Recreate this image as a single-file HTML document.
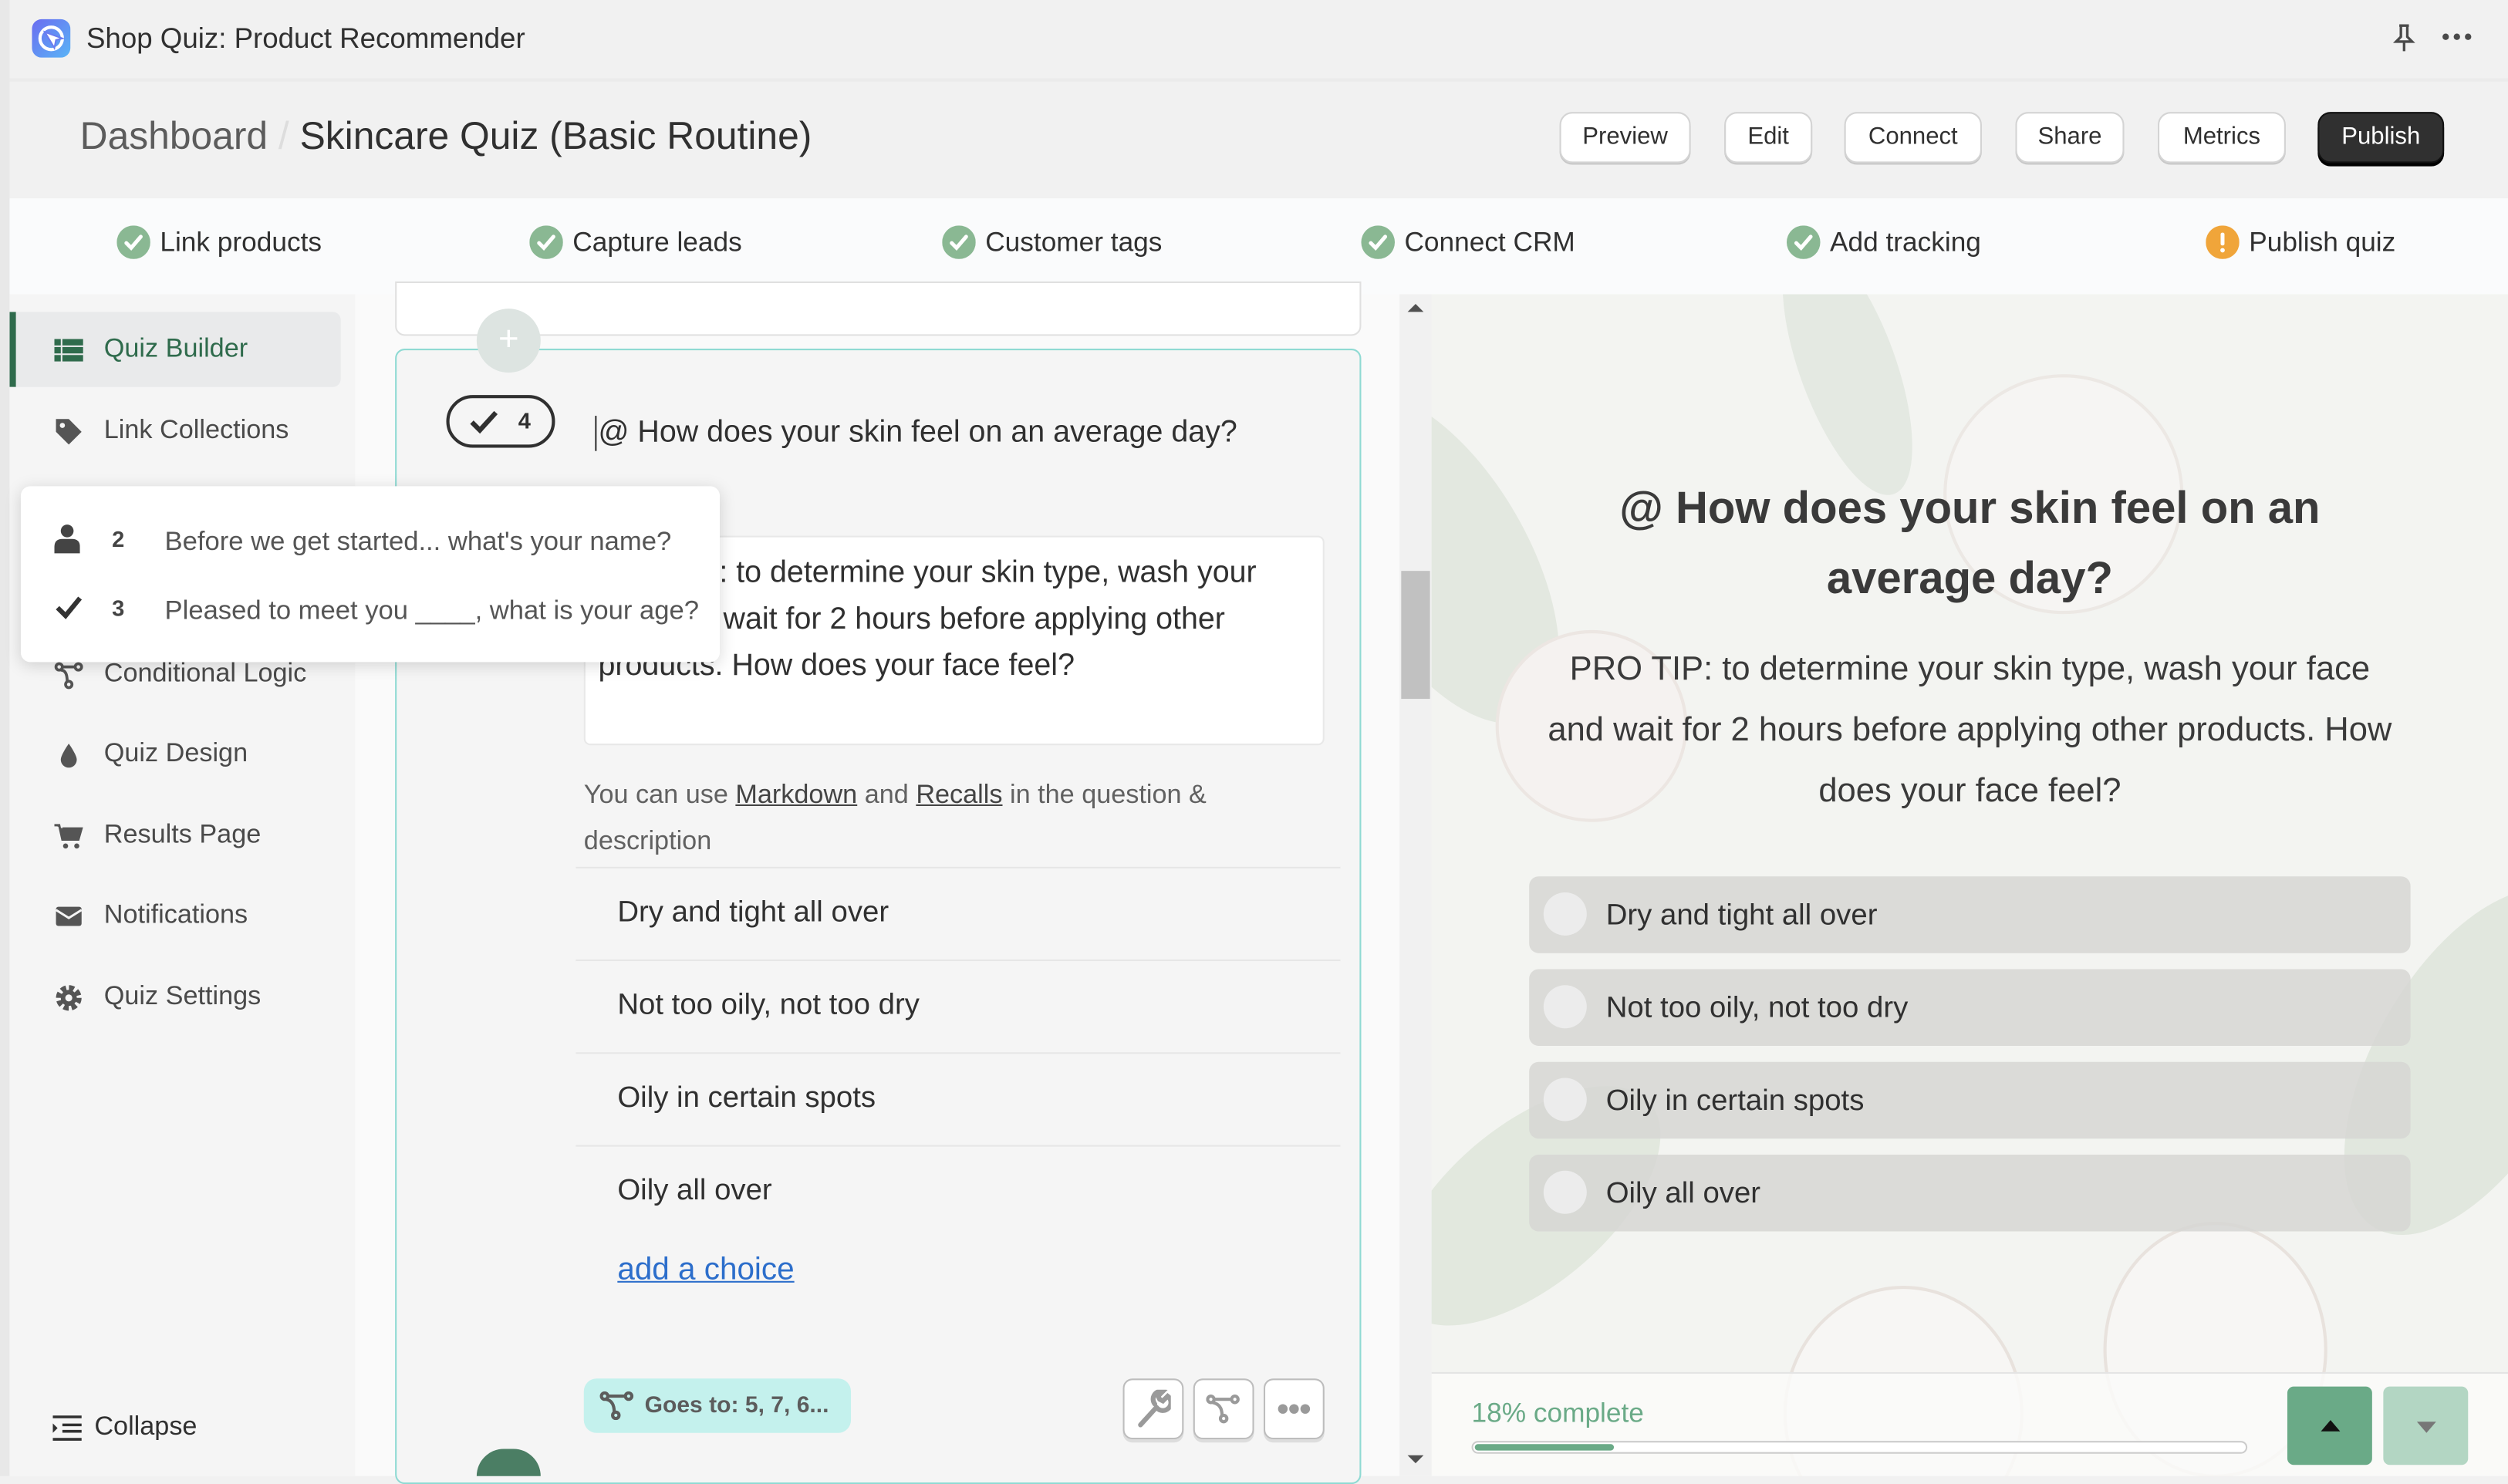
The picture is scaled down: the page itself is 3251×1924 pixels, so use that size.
<!DOCTYPE html>
<html><head><meta charset="utf-8"><style>
*{box-sizing:border-box;margin:0;padding:0}
html,body{width:3251px;height:1914px;overflow:hidden;background:#f1f1f1;font-family:"Liberation Sans",Arial,sans-serif}
#s{position:absolute;left:0;top:0;width:1568px;height:923px;transform:scale(2.0734);transform-origin:0 0;background:#f1f1f1;color:#303030}
.a{position:absolute}
.btn{position:absolute;top:70px;height:32px;border:1px solid #d4d4d4;border-radius:8px;background:#fff;font-size:15px;line-height:30px;text-align:center;color:#303030;box-shadow:0 1px 0 #c8c8c8}
.chk{position:absolute;top:141px;font-size:17px;color:#303030;display:flex;align-items:center;gap:6px}
.nav{position:absolute;left:34px;font-size:16.5px;color:#4a4a4a;display:flex;align-items:center;gap:13px}
.nav svg{width:18px;height:18px}
.opt{position:absolute;left:360px;width:478px;height:58px;border-top:1px solid #e6e6e6;font-size:18.5px;color:#303030;padding-left:26px;line-height:54px}
.pv{position:absolute;left:956px;width:551px;height:48px;border-radius:6px;background:rgba(214,214,212,.85);font-size:18.5px;color:#303030;line-height:48px;padding-left:48px}
.pv i{position:absolute;left:9px;top:10px;width:27px;height:27px;border-radius:50%;background:#ececec}
.ib{position:absolute;top:862px;width:38px;height:38px;border:1px solid #bdbdbd;border-radius:6px;background:#fff;box-shadow:0 2px 0 #ddd;display:flex;align-items:center;justify-content:center}
</style></head><body><div id="s">
<div class="a" style="left:0;top:0;width:6px;height:923px;background:#e8e8e8"></div>
<div class="a" style="left:20px;top:12px;width:24px;height:24px;border-radius:6px;background:linear-gradient(135deg,#6a6cf0,#5ab4f6)"><svg width="24" height="24" viewBox="0 0 24 24"><circle cx="12" cy="12" r="7" fill="none" stroke="#fff" stroke-width="2"/><path d="M8 8 L14 18 L15 13 L19 12 Z" fill="#fff" stroke="#6a7cf0" stroke-width="1"/></svg></div>
<div class="a" style="left:54px;top:14px;font-size:17.7px;color:#303030">Shop Quiz: Product Recommender</div>
<svg class="a" style="left:1494px;top:14px" width="18" height="20" viewBox="0 0 18 20"><path d="M6 2h6M7 2v7l-3 3h10l-3-3V2M9 12v6" fill="none" stroke="#4a4a4a" stroke-width="1.6"/></svg>
<svg class="a" style="left:1526px;top:20px" width="20" height="6"><circle cx="3" cy="3" r="2" fill="#4a4a4a"/><circle cx="10" cy="3" r="2" fill="#4a4a4a"/><circle cx="17" cy="3" r="2" fill="#4a4a4a"/></svg>
<div class="a" style="left:6px;top:49px;width:1562px;height:2px;background:#ebebeb"></div>
<div class="a" style="left:50px;top:72px;font-size:24px;color:#5c5c5c">Dashboard <span style="color:#ddd">/</span> <span style="color:#303030">Skincare Quiz (Basic Routine)</span></div>
<div class="btn" style="left:975px;width:82px">Preview</div>
<div class="btn" style="left:1078px;width:55px">Edit</div>
<div class="btn" style="left:1153px;width:86px">Connect</div>
<div class="btn" style="left:1260px;width:68px">Share</div>
<div class="btn" style="left:1349px;width:80px">Metrics</div>
<div class="btn" style="left:1449px;width:79px;background:#303030;color:#fff;border-color:#111;box-shadow:0 2px 0 #000">Publish</div>
<div class="a" style="left:6px;top:124px;width:1562px;height:60px;background:#fafbfc"></div>
<svg width="0" height="0" style="position:absolute"><defs><symbol id="ck" viewBox="0 0 21 21"><circle cx="10.5" cy="10.5" r="10.5" fill="#8ab893"/><path d="M6 11l3 3 6-7" fill="none" stroke="#fff" stroke-width="2.4" stroke-linecap="round"/></symbol></defs></svg>
<div class="chk" style="left:73px"><svg width="21" height="21"><use href="#ck"/></svg>Link products</div>
<div class="chk" style="left:331px"><svg width="21" height="21"><use href="#ck"/></svg>Capture leads</div>
<div class="chk" style="left:589px"><svg width="21" height="21"><use href="#ck"/></svg>Customer tags</div>
<div class="chk" style="left:851px"><svg width="21" height="21"><use href="#ck"/></svg>Connect CRM</div>
<div class="chk" style="left:1117px"><svg width="21" height="21"><use href="#ck"/></svg>Add tracking</div>
<div class="chk" style="left:1379px"><svg width="21" height="21"><circle cx="10.5" cy="10.5" r="10.5" fill="#f0a53a"/><rect x="9.3" y="4.5" width="2.4" height="8" rx="1" fill="#fff"/><circle cx="10.5" cy="15.5" r="1.4" fill="#fff"/></svg>Publish quiz</div>
<div class="a" style="left:6px;top:184px;width:216px;height:739px;background:#f5f5f5"></div>
<div class="a" style="left:6px;top:195px;width:207px;height:47px;background:#e9eaeb;border-radius:0 5px 5px 0;border-left:4px solid #2f6b4c"></div>
<div class="nav" style="top:209px;color:#2f6b4c"><svg viewBox="0 0 18 18"><g fill="#2f6b4c"><rect x="0" y="2" width="4" height="4"/><rect x="5" y="2" width="13" height="4"/><rect x="0" y="7" width="4" height="4"/><rect x="5" y="7" width="13" height="4"/><rect x="0" y="12" width="4" height="4"/><rect x="5" y="12" width="13" height="4"/></g></svg>Quiz Builder</div>
<div class="nav" style="top:260px"><svg viewBox="0 0 18 18"><path d="M1 1h8l8 8-8 8-8-8z" fill="#555"/><circle cx="5" cy="5" r="1.6" fill="#f5f5f5"/></svg>Link Collections</div>
<div class="nav" style="top:412px"><svg viewBox="0 0 18 18"><g fill="none" stroke="#555" stroke-width="1.8"><circle cx="3" cy="4" r="2"/><circle cx="15" cy="4" r="2"/><circle cx="9" cy="15" r="2"/><path d="M5 4h8M4 6q4 0 4 7"/></g></svg>Conditional Logic</div>
<div class="nav" style="top:462px"><svg viewBox="0 0 18 18"><path d="M9 2C9 2 4 9 4 12a5 5 0 0010 0C14 9 9 2 9 2z" fill="#555"/></svg>Quiz Design</div>
<div class="nav" style="top:513px"><svg viewBox="0 0 18 18"><path d="M0 2h3l2 9h10l2-7H5" fill="#555" stroke="#555" stroke-width="1.4"/><circle cx="7" cy="15" r="1.6" fill="#555"/><circle cx="14" cy="15" r="1.6" fill="#555"/></svg>Results Page</div>
<div class="nav" style="top:563px"><svg viewBox="0 0 18 18"><rect x="1" y="3" width="16" height="12" rx="1.5" fill="#555"/><path d="M1 5l8 5 8-5" fill="none" stroke="#f5f5f5" stroke-width="1.4"/></svg>Notifications</div>
<div class="nav" style="top:614px"><svg viewBox="0 0 18 18"><circle cx="9" cy="9" r="6" fill="none" stroke="#555" stroke-width="4" stroke-dasharray="3 1.7"/><circle cx="9" cy="9" r="5" fill="#555"/><circle cx="9" cy="9" r="2.2" fill="#f5f5f5"/></svg>Quiz Settings</div>
<div class="a" style="left:33px;top:883px;font-size:16.5px;color:#303030;display:flex;align-items:center;gap:7px"><svg width="19" height="16" viewBox="0 0 19 16"><path d="M0 1h18M6 6h12M6 10h12M0 15h18" stroke="#303030" stroke-width="1.7"/><path d="M0 5l3 3-3 3z" fill="#303030"/></svg>Collapse</div>
<div class="a" style="left:222px;top:184px;width:653px;height:739px;background:#fafafa"></div>
<div class="a" style="left:247px;top:176px;width:604px;height:34px;background:#fff;border:1px solid #e0e0e0;border-radius:0 0 6px 6px"></div>
<div class="a" style="left:247px;top:218px;width:604px;height:710px;background:#f5f5f5;border:1.5px solid #8fdad3;border-radius:6px"></div>
<div class="a" style="left:298px;top:193px;width:40px;height:40px;border-radius:50%;background:#dde4e1;color:#fff;font-size:22px;text-align:center;line-height:38px">+</div>
<div class="a" style="left:279px;top:247px;width:68px;height:33px;border:2.5px solid #303030;border-radius:17px;background:#f5f5f5"><svg class="a" style="left:12px;top:7px" width="20" height="16" viewBox="0 0 20 16"><path d="M2 8l5 5 10-11" fill="none" stroke="#303030" stroke-width="3"/></svg><span class="a" style="left:43px;top:6px;font-size:14px;font-weight:bold">4</span></div>
<div class="a" style="left:372px;top:260px;font-size:19px;color:#303030;border-left:1px solid #303030;padding-left:1px">@ How does your skin feel on an average day?</div>
<div class="a" style="left:365px;top:335px;width:463px;height:131px;background:#fff;border:1px solid #e8e8e8;border-radius:4px;padding:8px 30px 0 8px;font-size:19px;line-height:29px;color:#303030">PRO TIP: to determine your skin type, wash your face and wait for 2 hours before applying other products. How does your face feel?</div>
<div class="a" style="left:365px;top:483px;width:420px;font-size:16.5px;line-height:29px;color:#616161">You can use <u style="color:#444">Markdown</u> and <u style="color:#444">Recalls</u> in the question &amp; description</div>
<div class="opt" style="top:542px">Dry and tight all over</div>
<div class="opt" style="top:600px">Not too oily, not too dry</div>
<div class="opt" style="top:658px">Oily in certain spots</div>
<div class="opt" style="top:716px">Oily all over</div>
<div class="a" style="left:386px;top:783px;font-size:19.5px;color:#2c6ecb;text-decoration:underline">add a choice</div>
<div class="a" style="left:365px;top:862px;width:167px;height:34px;background:#c4f1ed;border-radius:8px;font-size:14.5px;font-weight:bold;color:#5c5c5c;line-height:34px;padding-left:38px"><svg class="a" style="left:10px;top:8px" width="22" height="18" viewBox="0 0 22 18"><g fill="none" stroke="#5c5c5c" stroke-width="2"><circle cx="3" cy="3" r="2"/><circle cx="18" cy="3" r="2"/><circle cx="10" cy="15" r="2"/><path d="M5 3h11M4 5q5 1 5 8"/></g></svg>Goes to: 5, 7, 6...</div>
<div class="ib" style="left:702px"><svg width="22" height="24" viewBox="0 0 22 24"><path d="M3 22l10-11M13 11a5 5 0 107-7l-3 3-2-1-1-2 3-3a5 5 0 00-5 8" fill="none" stroke="#9a9a9a" stroke-width="3" stroke-linecap="round"/></svg></div>
<div class="ib" style="left:746px"><svg width="22" height="20" viewBox="0 0 22 20"><g fill="none" stroke="#9a9a9a" stroke-width="2"><circle cx="3" cy="4" r="2"/><circle cx="18" cy="4" r="2"/><circle cx="11" cy="16" r="2"/><path d="M5 4h11M4 6q6 1 6 8"/></g></svg></div>
<div class="ib" style="left:790px"><svg width="22" height="8"><circle cx="4" cy="4" r="3" fill="#9a9a9a"/><circle cx="11" cy="4" r="3" fill="#9a9a9a"/><circle cx="18" cy="4" r="3" fill="#9a9a9a"/></svg></div>
<div class="a" style="left:298px;top:906px;width:40px;height:17px;border-radius:20px 20px 0 0;background:#4b7e64"></div>
<div class="a" style="left:13px;top:304px;width:437px;height:110px;background:#fff;border-radius:6px;box-shadow:0 2px 10px rgba(0,0,0,.15)"></div>
<svg class="a" style="left:34px;top:327px" width="16" height="20" viewBox="0 0 16 20"><circle cx="8" cy="5" r="4" fill="#444"/><path d="M0 19v-4q0-5 5-5h6q5 0 5 5v4z" fill="#444"/></svg>
<div class="a" style="left:70px;top:329px;font-size:14px;font-weight:bold;color:#444">2</div>
<div class="a" style="left:103px;top:329px;font-size:16.7px;color:#555">Before we get started... what's your name?</div>
<svg class="a" style="left:34px;top:372px" width="18" height="16" viewBox="0 0 18 16"><path d="M2 8l5 5 9-11" fill="none" stroke="#333" stroke-width="3"/></svg>
<div class="a" style="left:70px;top:372px;font-size:14px;font-weight:bold;color:#444">3</div>
<div class="a" style="left:103px;top:372px;font-size:16.7px;color:#555">Pleased to meet you ____, what is your age?</div>
<div class="a" style="left:875px;top:184px;width:20px;height:739px;background:#f1f1f1"></div>
<div class="a" style="left:876px;top:357px;width:18px;height:80px;background:#c1c1c1"></div>
<div class="a" style="left:880px;top:190px;width:0;height:0;border:5px solid transparent;border-bottom-color:#505050;border-top:0"></div>
<div class="a" style="left:880px;top:910px;width:0;height:0;border:5px solid transparent;border-top-color:#505050;border-bottom:0"></div>
<div class="a" style="left:895px;top:184px;width:673px;height:739px;background:#f3f4f1;overflow:hidden">
<div class="a" style="left:-50px;top:50px;width:110px;height:230px;border-radius:50%;background:#e3e8e0;transform:rotate(-30deg)"></div>
<div class="a" style="left:230px;top:-40px;width:60px;height:170px;border-radius:50%;background:#e4e9e2;transform:rotate(-20deg)"></div>
<div class="a" style="left:320px;top:50px;width:150px;height:150px;border-radius:50%;background:#f6f5f3;border:2px solid #ece8e4"></div>
<div class="a" style="left:40px;top:210px;width:120px;height:120px;border-radius:50%;background:#f5f2f0;border:2px solid #ece6e2"></div>
<div class="a" style="left:590px;top:360px;width:120px;height:240px;border-radius:50%;background:#e1e7de;transform:rotate(30deg)"></div>
<div class="a" style="left:-40px;top:520px;width:200px;height:100px;border-radius:50%;background:#e2e8de;transform:rotate(-40deg)"></div>
<div class="a" style="left:220px;top:620px;width:150px;height:160px;border-radius:50%;background:#f7f6f4;border:2px solid #e8e2dd"></div>
<div class="a" style="left:420px;top:580px;width:140px;height:160px;border-radius:50%;background:#f7f6f4;border:2px solid #e8e2dd"></div>
</div>
<div class="a" style="left:895px;top:296px;width:673px;text-align:center;font-size:28px;font-weight:bold;line-height:44px;color:#3a3a3a">@ How does your skin feel on an<br>average day?</div>
<div class="a" style="left:963px;top:400px;width:537px;text-align:center;font-size:21px;line-height:38px;color:#3a3a3a">PRO TIP: to determine your skin type, wash your face<br>and wait for 2 hours before applying other products. How<br>does your face feel?</div>
<div class="pv" style="top:548px"><i></i>Dry and tight all over</div>
<div class="pv" style="top:606px"><i></i>Not too oily, not too dry</div>
<div class="pv" style="top:664px"><i></i>Oily in certain spots</div>
<div class="pv" style="top:722px"><i></i>Oily all over</div>
<div class="a" style="left:895px;top:858px;width:673px;height:65px;background:rgba(250,250,249,.85);border-top:1px solid #e4e4e4"></div>
<div class="a" style="left:920px;top:874px;font-size:17px;color:#6aaa87">18% complete</div>
<div class="a" style="left:920px;top:901px;width:485px;height:8px;border:1px solid #ccc;border-radius:4px;background:#fff"><div style="margin:1px;width:87px;height:4px;background:#6aaa87;border-radius:2px"></div></div>
<div class="a" style="left:1430px;top:867px;width:53px;height:49px;background:#6aaa87;border-radius:4px"><div class="a" style="left:21px;top:21px;border:6px solid transparent;border-bottom:7px solid #111;border-top:0"></div></div>
<div class="a" style="left:1490px;top:867px;width:53px;height:49px;background:#b3d6c3;border-radius:4px"><div class="a" style="left:21px;top:22px;border:6px solid transparent;border-top:7px solid #777;border-bottom:0"></div></div>
</div></body></html>
